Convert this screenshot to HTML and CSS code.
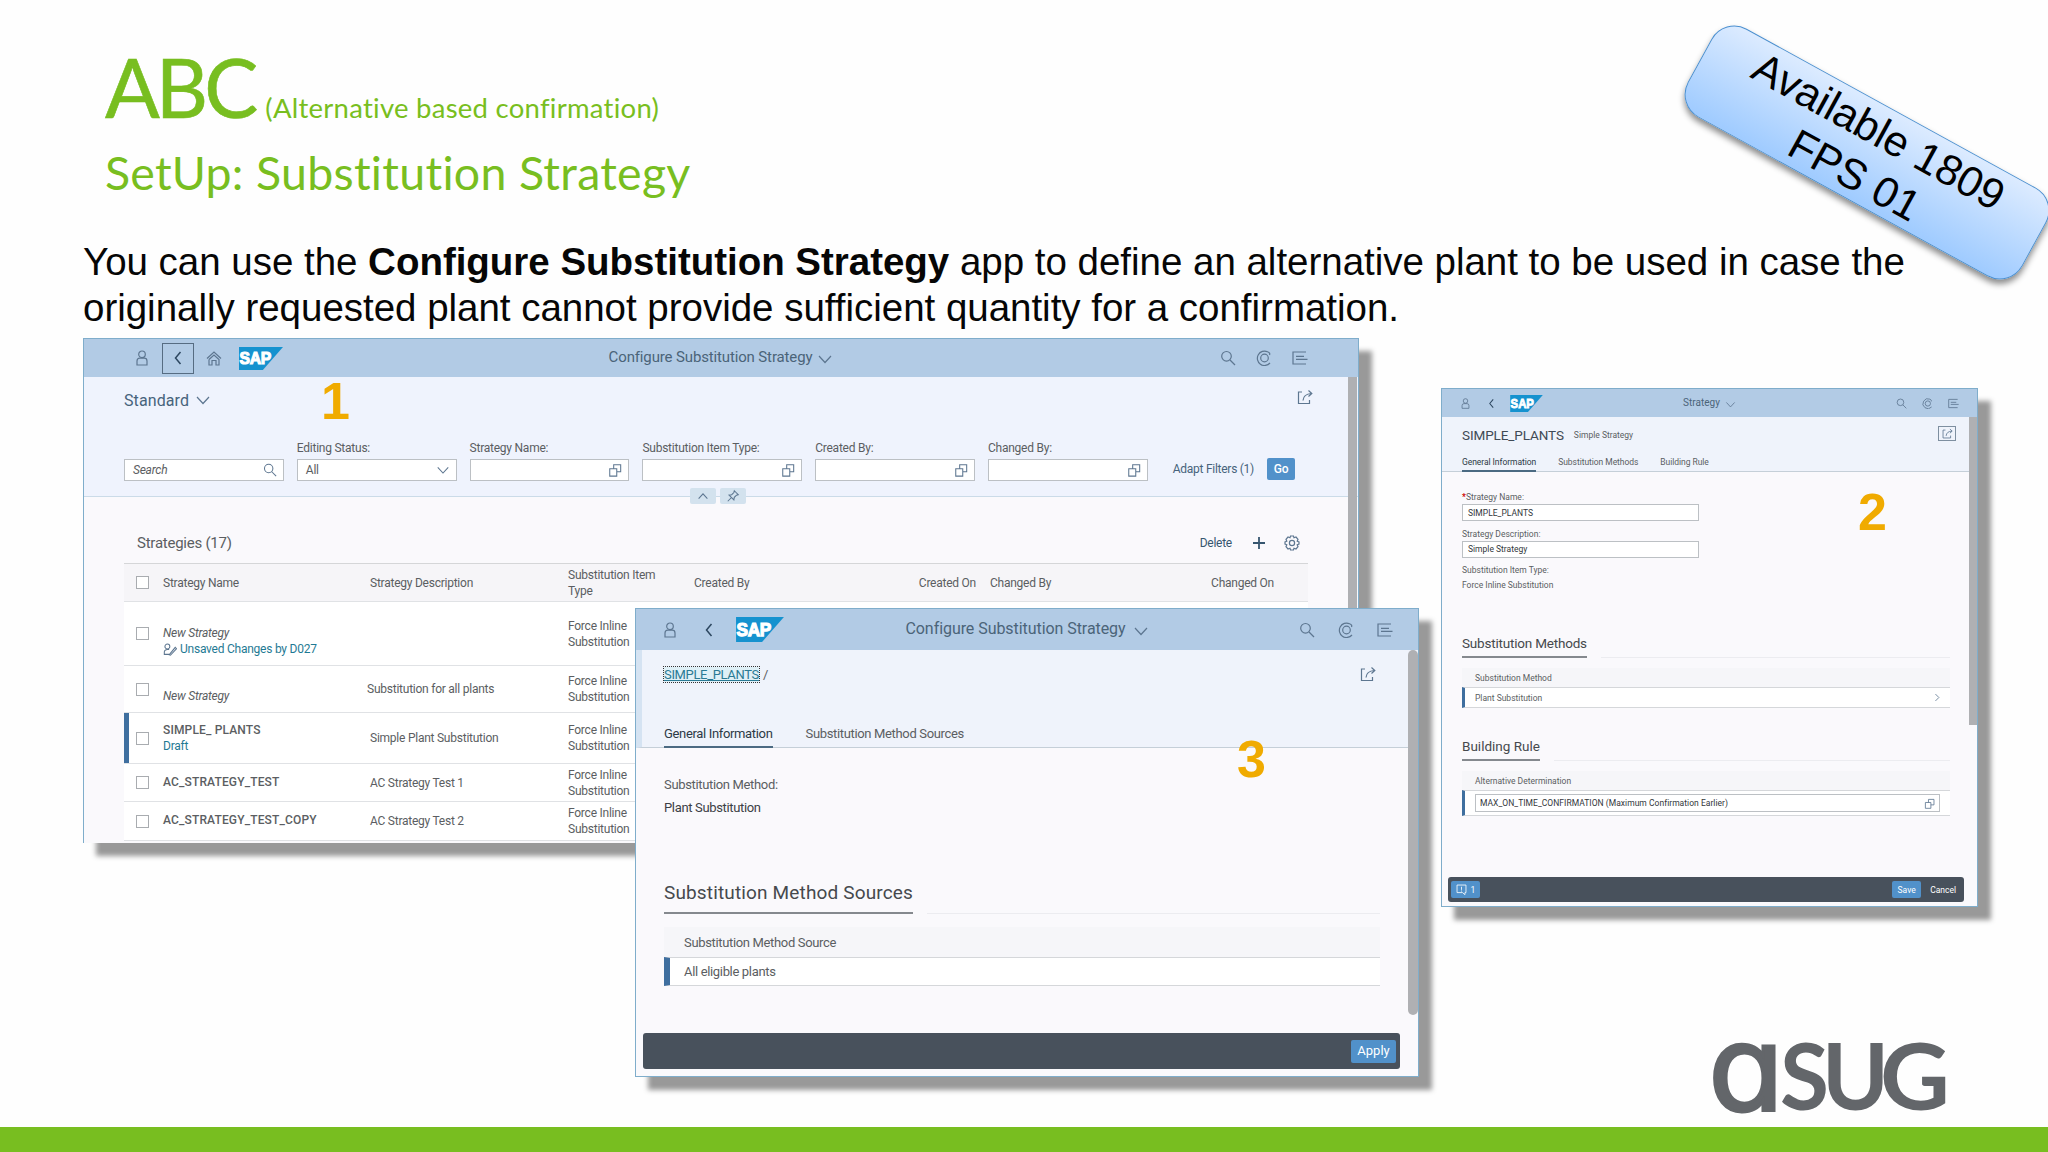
FILE: index.html
```html
<!DOCTYPE html>
<html lang="en">
  <head>
    <meta charset="utf-8" />
    <title>ABC SetUp: Substitution Strategy</title>
    <link rel="stylesheet" href="styles.css">
  </head>

  <body>
    <!-- icon set -->
    <svg class="defs">
      <symbol id="i-user" viewBox="0 0 16 16">
        <circle cx="8" cy="4.3" r="3.3" />
        <path d="M3 15V11Q3 8.2 5.8 8.2H10.2Q13 8.2 13 11V15Z" />
      </symbol>
      <symbol id="i-back" viewBox="0 0 16 16"><path d="M10.5 2 5.5 8l5 6" /></symbol>
      <symbol id="i-down" viewBox="0 0 16 16"><path d="M2 5l6 6.5L14 5" /></symbol>
      <symbol id="i-up" viewBox="0 0 16 16"><path d="M3 11l5-5.5 5 5.5" /></symbol>
      <symbol id="i-right" viewBox="0 0 16 16"><path d="M5 3l5 5-5 5" /></symbol>
      <symbol id="i-home" viewBox="0 0 16 16">
        <path d="M1 8.5 8 2l7 6.5M3 9.5 8 5l5 4.5V15H10V10.5H6V15H3V9.5" />
      </symbol>
      <symbol id="i-search" viewBox="0 0 16 16">
        <circle cx="6.5" cy="6.3" r="4.8" />
        <path d="M10 10l5 5" />
      </symbol>
      <symbol id="i-copilot" viewBox="0 0 16 16">
        <circle cx="8.5" cy="8" r="3.8" />
        <path d="M14 13A7.200 7.200 0 1 1 11.500 1.700Q14.500 3 13.500 5" />
      </symbol>
      <symbol id="i-menu" viewBox="0 0 16 16">
        <path d="M14 2H1V14H14M4 6.300H12M4 9.300H15.500" />
      </symbol>
      <symbol id="i-share" viewBox="0 0 16 16">
        <path d="M5 3H1.500V14.500H12.500V11M6 11.500Q6.500 5 14.500 4.500M11.500 1.500 14.800 4.500 11.500 7.500" />
      </symbol>
      <symbol id="i-help" viewBox="0 0 16 16">
        <path d="M2 6.500H10V15H2ZM6.500 6.500V2H14.500V10H10" />
      </symbol>
      <symbol id="i-pin" viewBox="0 0 16 16">
        <path d="M9.500 2 14 6.500 12 7 9.500 9.500 9 12.500 3.500 7 6.500 6.500 9 4ZM6 10 2 14" />
      </symbol>
      <symbol id="i-plus" viewBox="0 0 16 16"><path d="M8 2V14M2 8H14" /></symbol>
      <symbol id="i-gear" viewBox="0 0 16 16">
        <path d="M6.500 1H9.500L10 2.800 12 2 14 4.300 13.200 6.200 15 7V9L13.200 9.800 14 11.700 12 14 10 13.200 9.500 15H6.500L6 13.200 4 14 2 11.700 2.800 9.800 1 9V7L2.800 6.200 2 4.300 4 2 6 2.800Z" />
        <circle cx="8" cy="8" r="2.600" />
      </symbol>
      <symbol id="i-edit" viewBox="0 0 16 16">
        <circle cx="5" cy="4" r="2.800" />
        <path d="M7 13H1.500V10Q2 7.500 5 7.500H7M7 13.500 14 5l1.500 1.500L8.500 14Z" />
      </symbol>
      <symbol id="i-msg" viewBox="0 0 16 16">
        <path d="M1.500 1.500H14.500V12.500H13V15.500L9.500 12.500H1.500ZM8 4V8.500M8 9.500V11" />
      </symbol>
      <symbol id="i-sap" viewBox="0 0 46 24">
        <path class="sap-bg" d="M0 0H46L25 24H0Z" />
        <text class="sap-text" x="0.500" y="18" textLength="33" lengthAdjust="spacingAndGlyphs">SAP</text>
      </symbol>
    </svg>

    <main class="slide">
      <header class="title">
        <h1>ABC<small>(Alternative based confirmation)</small></h1>
        <h2>SetUp: Substitution Strategy</h2>
      </header>

      <p class="intro">
        You can use the <b>Configure Substitution Strategy</b> app to define an alternative plant to be used in case the<br />
        originally requested plant cannot provide sufficient quantity for a confirmation.
      </p>

      <div class="badge">Available 1809<br />FPS 01</div>

      <!-- 1. strategy list -->
      <section class="win win1">
        <div class="shell">
          <div class="shell-left">
            <svg class="ic"><use href="#i-user" /></svg>
            <span class="back-box"><svg class="ic dark"><use href="#i-back" /></svg></span>
            <svg class="ic"><use href="#i-home" /></svg>
            <svg class="sap"><use href="#i-sap" /></svg>
          </div>
          <div class="shell-title">
            <span>Configure Substitution Strategy</span>
            <svg class="ic"><use href="#i-down" /></svg>
          </div>
          <div class="shell-right">
            <svg class="ic"><use href="#i-search" /></svg>
            <svg class="ic"><use href="#i-copilot" /></svg>
            <svg class="ic"><use href="#i-menu" /></svg>
          </div>
        </div>

        <div class="filter">
          <div class="variant">
            <span>Standard</span>
            <svg class="ic"><use href="#i-down" /></svg>
            <svg class="ic share"><use href="#i-share" /></svg>
          </div>
          <div class="fields">
            <div class="field">
              <label></label>
              <div class="input"><i>Search</i><svg class="ic"><use href="#i-search" /></svg></div>
            </div>
            <div class="field">
              <label>Editing Status:</label>
              <div class="input"><span>All</span><svg class="ic"><use href="#i-down" /></svg></div>
            </div>
            <div class="field">
              <label>Strategy Name:</label>
              <div class="input"><span></span><svg class="ic"><use href="#i-help" /></svg></div>
            </div>
            <div class="field">
              <label>Substitution Item Type:</label>
              <div class="input"><span></span><svg class="ic"><use href="#i-help" /></svg></div>
            </div>
            <div class="field">
              <label>Created By:</label>
              <div class="input"><span></span><svg class="ic"><use href="#i-help" /></svg></div>
            </div>
            <div class="field">
              <label>Changed By:</label>
              <div class="input"><span></span><svg class="ic"><use href="#i-help" /></svg></div>
            </div>
            <span class="adapt">Adapt Filters (1)</span>
            <span class="btn go">Go</span>
          </div>
          <div class="toggles">
            <span><svg class="ic"><use href="#i-up" /></svg></span>
            <span><svg class="ic"><use href="#i-pin" /></svg></span>
          </div>
        </div>

        <div class="list">
          <div class="toolbar">
            <h3>Strategies (17)</h3>
            <span class="delete">Delete</span>
            <svg class="ic plus"><use href="#i-plus" /></svg>
            <svg class="ic gear"><use href="#i-gear" /></svg>
          </div>
          <div class="row head">
            <i class="cb"></i>
            <span>Strategy Name</span>
            <span>Strategy Description</span>
            <span>Substitution Item<br />Type</span>
            <span>Created By</span>
            <span class="right">Created On</span>
            <span class="changed-by">Changed By</span>
            <span class="right">Changed On</span>
          </div>
          <div class="row r1">
            <i class="cb"></i>
            <div class="name">
              <em>New Strategy</em>
              <span class="state"><svg class="ic"><use href="#i-edit" /></svg>Unsaved Changes by D027</span>
            </div>
            <span></span>
            <span>Force Inline<br />Substitution</span>
          </div>
          <div class="row r2">
            <i class="cb"></i>
            <div class="name"><em>New Strategy</em></div>
            <span class="desc-all">Substitution for all plants</span>
            <span>Force Inline<br />Substitution</span>
          </div>
          <div class="row r3">
            <i class="cb"></i>
            <div class="name"><b>SIMPLE_ PLANTS</b><span class="state">Draft</span></div>
            <span>Simple Plant Substitution</span>
            <span>Force Inline<br />Substitution</span>
          </div>
          <div class="row r4">
            <i class="cb"></i>
            <div class="name"><b>AC_STRATEGY_TEST</b></div>
            <span>AC Strategy Test 1</span>
            <span>Force Inline<br />Substitution</span>
          </div>
          <div class="row r5">
            <i class="cb"></i>
            <div class="name"><b>AC_STRATEGY_TEST_COPY</b></div>
            <span>AC Strategy Test 2</span>
            <span>Force Inline<br />Substitution</span>
          </div>
        </div>
        <i class="scroll"></i>
        <b class="num">1</b>
      </section>

      <!-- 2. strategy detail -->
      <section class="win win2">
        <div class="shell">
          <div class="shell-left">
            <svg class="ic"><use href="#i-user" /></svg>
            <svg class="ic dark"><use href="#i-back" /></svg>
            <svg class="sap"><use href="#i-sap" /></svg>
          </div>
          <div class="shell-title">
            <span>Strategy</span>
            <svg class="ic"><use href="#i-down" /></svg>
          </div>
          <div class="shell-right">
            <svg class="ic"><use href="#i-search" /></svg>
            <svg class="ic"><use href="#i-copilot" /></svg>
            <svg class="ic"><use href="#i-menu" /></svg>
          </div>
        </div>
        <div class="object">
          <div class="object-title">
            <h3>SIMPLE_PLANTS</h3>
            <span>Simple Strategy</span>
            <span class="share-box"><svg class="ic"><use href="#i-share" /></svg></span>
          </div>
          <nav class="tabs">
            <span class="on">General Information</span>
            <span>Substitution Methods</span>
            <span>Building Rule</span>
          </nav>
        </div>
        <div class="form">
          <label><b class="req">*</b>Strategy Name:</label>
          <div class="input">SIMPLE_PLANTS</div>
          <label>Strategy Description:</label>
          <div class="input">Simple Strategy</div>
          <label>Substitution Item Type:</label>
          <p>Force Inline Substitution</p>
        </div>
        <div class="block">
          <div class="block-title"><h4>Substitution Methods</h4></div>
          <div class="th">Substitution Method</div>
          <div class="td"><span>Plant Substitution</span><svg class="ic"><use href="#i-right" /></svg></div>
        </div>
        <div class="block rule">
          <div class="block-title"><h4>Building Rule</h4></div>
          <div class="th">Alternative Determination</div>
          <div class="td">
            <div class="input"><span>MAX_ON_TIME_CONFIRMATION (Maximum Confirmation Earlier)</span><svg class="ic"><use href="#i-help" /></svg></div>
          </div>
        </div>
        <footer class="bar">
          <span class="btn msg"><svg class="ic"><use href="#i-msg" /></svg>1</span>
          <span class="btn save">Save</span>
          <span class="cancel">Cancel</span>
        </footer>
        <i class="scroll"></i>
        <b class="num">2</b>
      </section>

      <!-- 3. method sources -->
      <section class="win win3">
        <div class="shell">
          <div class="shell-left">
            <svg class="ic"><use href="#i-user" /></svg>
            <svg class="ic dark"><use href="#i-back" /></svg>
            <svg class="sap"><use href="#i-sap" /></svg>
          </div>
          <div class="shell-title">
            <span>Configure Substitution Strategy</span>
            <svg class="ic"><use href="#i-down" /></svg>
          </div>
          <div class="shell-right">
            <svg class="ic"><use href="#i-search" /></svg>
            <svg class="ic"><use href="#i-copilot" /></svg>
            <svg class="ic"><use href="#i-menu" /></svg>
          </div>
        </div>
        <div class="object">
          <div class="crumb">
            <a>SIMPLE_PLANTS</a><span>/</span>
            <svg class="ic share"><use href="#i-share" /></svg>
          </div>
          <nav class="tabs">
            <span class="on">General Information</span>
            <span>Substitution Method Sources</span>
          </nav>
        </div>
        <div class="form">
          <label>Substitution Method:</label>
          <p>Plant Substitution</p>
        </div>
        <div class="block">
          <div class="block-title"><h4>Substitution Method Sources</h4></div>
          <div class="th">Substitution Method Source</div>
          <div class="td"><span>All eligible plants</span></div>
        </div>
        <footer class="bar"><span class="btn apply">Apply</span></footer>
        <i class="scroll"></i>
        <b class="num">3</b>
      </section>

      <svg class="asug" viewBox="0 0 236 72" role="img" aria-label="asug">
        <text class="asug-a" x="-4" y="68.500" textLength="77" lengthAdjust="spacingAndGlyphs">ɑ</text>
        <text x="68" y="69" textLength="49" lengthAdjust="spacingAndGlyphs">S</text>
        <text x="110" y="69" textLength="67" lengthAdjust="spacingAndGlyphs">U</text>
        <text x="168" y="69" textLength="70" lengthAdjust="spacingAndGlyphs">G</text>
      </svg>
      <div class="stripe"></div>
    </main>
  </body>
</html>
```
FILE: styles.css
```css
* {
  box-sizing: border-box;
}
body {
  margin: 0;
  background: #fff;
  font-family: Roboto, "Liberation Sans", sans-serif;
  color: #5b5e62;
}
h1, h2, h3, h4, p {
  margin: 0;
  font-weight: 400;
}
.defs {
  display: none;
}

/* slide */
.slide {
  position: relative;
  width: 2048px;
  height: 1152px;
  overflow: hidden;
  background: #fefefe;
}
.title {
  padding: 39px 0 0 105px;
  font-family: Lato, "Open Sans", sans-serif;
  font-variant-ligatures: none;
  color: #78be20;
}
.title h1 {
  font-size: 81px;
  line-height: 96px;
  letter-spacing: -4px;
  -webkit-text-stroke: .6px #78be20;
}
.title small {
  margin-left: 11px;
  font-size: 27.5px;
  letter-spacing: .26px;
  -webkit-text-stroke: 0;
}
.title h2 {
  margin-top: -11px;
  font-size: 46.5px;
  line-height: 54px;
  letter-spacing: .28px;
}
.intro {
  padding: 40px 0 0 83px;
  font: 38.5px/46px "Liberation Sans", Arial, sans-serif;
  letter-spacing: -.02px;
  white-space: nowrap;
  color: #060606;
}

/* version sticker */
.badge {
  position: absolute;
  left: 1676px;
  top: 102px;
  width: 382px;
  height: 101px;
  border: 1px solid #4a8fd0;
  border-radius: 26px;
  background: linear-gradient(#dcebff, #9fcbff);
  box-shadow: 2px 4px 6px rgba(0, 0, 0, .45);
  transform: rotate(28.8deg);
  font: 42.8px/50px "Liberation Sans", Arial, sans-serif;
  text-align: center;
  color: #000;
}

/* icons */
.ic {
  flex: none;
  width: 16px;
  height: 16px;
  fill: none;
  stroke: #5d7690;
  stroke-width: 1.2;
}
.ic.dark {
  stroke: #2d4760;
  stroke-width: 1.5;
}
.sap-bg {
  fill: #1592cf;
}
.sap-text {
  fill: #fff;
  stroke: #fff;
  stroke-width: 1.2;
  font: bold 18px "Liberation Sans", Arial, sans-serif;
}

/* windows */
.win {
  position: absolute;
  display: flex;
  flex-direction: column;
  border: 1px solid #7fadcb;
  background: #faf9fc;
  box-shadow: 13px 13px 5px #999;
}
.shell {
  display: grid;
  grid-template-columns: 1fr auto 1fr;
  align-items: center;
  background: #b2cbe5;
  color: #4b6479;
}
.shell-left,
.shell-title,
.shell-right {
  display: flex;
  align-items: center;
}
.shell-title span {
  margin-top: -2px;
}
.shell-title .ic {
  margin-top: 2px;
}
.shell-right {
  justify-content: flex-end;
}
.input {
  display: flex;
  align-items: center;
  justify-content: space-between;
  border: 1px solid #bcc0c4;
  background: #fff;
}
.btn {
  display: flex;
  align-items: center;
  justify-content: center;
  border-radius: 2px;
  background: #5191ca;
  color: #fff;
}
.scroll {
  position: absolute;
  background: #afb0b3;
}
.num {
  position: absolute;
  font: bold 52px/52px "Liberation Sans", Arial, sans-serif;
  color: #f0ab00;
}

/* window 1 */
.win1 {
  left: 83px;
  top: 338px;
  width: 1276px;
  height: 505px;
  border-bottom: 0;
  font-size: 12px;
  letter-spacing: -.24px;
}
.win1 .shell {
  height: 38px;
}
.win1 .shell-left {
  padding-left: 50px;
}
.back-box {
  display: flex;
  align-items: center;
  justify-content: center;
  width: 32px;
  height: 31px;
  margin: 0 12px 0 12px;
  border: 1px solid #566c82;
}
.win1 .sap {
  width: 44px;
  height: 23px;
  margin-left: 17px;
}
.win1 .shell-title {
  font-size: 15px;
  letter-spacing: -.14px;
  gap: 5px;
}
.win1 .shell-right {
  gap: 20px;
  padding-right: 50px;
}
.filter {
  height: 120px;
  padding: 12px 0 0 40px;
  border-bottom: 1px solid #cbdbe8;
  background: #eff3fd;
}
.variant {
  display: flex;
  align-items: center;
  height: 22px;
  font-size: 16px;
  letter-spacing: .1px;
  color: #47637c;
}
.variant .ic {
  margin-left: 6px;
}
.variant .share {
  margin: -7px 45px 0 auto;
}
.fields {
  display: flex;
  gap: 13px;
  height: 72px;
  padding-top: 29px;
}
.field {
  width: 159.8px;
}
.field label {
  display: block;
  height: 18px;
  line-height: 16px;
  white-space: nowrap;
}
.field .input {
  height: 22px;
  margin-top: 1px;
  padding: 0 6px 0 8px;
}
.field .ic {
  width: 14px;
  height: 14px;
}
.adapt {
  margin: 21px 0 0 12px;
  line-height: 16px;
  letter-spacing: -.27px;
  white-space: nowrap;
  color: #47637c;
}
.btn.go {
  width: 28px;
  height: 22px;
  margin-top: 18px;
  font-weight: 500;
}
.toggles {
  display: flex;
  gap: 4px;
  padding: 5px 0 0 566px;
}
.toggles span {
  display: flex;
  align-items: center;
  justify-content: center;
  width: 26px;
  height: 16px;
  border-radius: 2px;
  background: #d3e2ee;
}
.toggles .ic {
  width: 14px;
  height: 14px;
}
.list {
  padding: 0 50px 0 40px;
}
.toolbar {
  display: flex;
  align-items: center;
  height: 66px;
  padding: 25px 8px 0 13px;
}
.toolbar h3 {
  flex: 1;
  font-size: 15px;
}
.delete {
  color: #36566f;
}
.toolbar .plus {
  margin: 0 17px 0 19px;
  stroke: #36566f;
  stroke-width: 1.8;
}
.row {
  display: grid;
  grid-template-columns: 26px 207px 198px 126px 169px 113px 130px 168px;
  align-items: center;
  padding-left: 13px;
  border-bottom: 1px solid #e0e2e5;
  background: #fff;
  line-height: 15.6px;
  white-space: nowrap;
}
.row > span {
  padding-top: 2px;
}
.row.head {
  height: 39px;
  border-top: 1px solid #d5d6d8;
  background: #f6f5f8;
}
.cb {
  width: 13px;
  height: 13px;
  margin-left: -1px;
  border: 1px solid #a9acb0;
  background: #fff;
}
.right {
  text-align: right;
}
.changed-by {
  padding-left: 14px;
}
.name {
  display: flex;
  flex-direction: column;
}
.name b {
  font-weight: 500;
  letter-spacing: .15px;
}
.state {
  display: flex;
  align-items: center;
  color: #1f7a94;
}
.state .ic {
  width: 14px;
  height: 14px;
  margin-right: 3px;
}
.r1 { height: 64px; }
.r1 .name { padding-top: 17px; }
.r2 { height: 47px; }
.r2 .name { padding-top: 16px; }
.r3 { height: 51px; box-shadow: inset 5px 0 #3f6f9f; }
.r3 .name { padding-top: 1px; }
.r4 { height: 38px; }
.r5 { height: 39px; }
.desc-all { margin-left: -3px; }
.win1 .scroll {
  right: 1px;
  top: 38px;
  width: 9px;
  bottom: 0;
}
.win1 .num {
  left: 237px;
  top: 36px;
}

/* object pages (windows 2 and 3) */
.object {
  border-bottom: 1px solid #c5cfd8;
  background: #eff3fb;
}
.tabs {
  display: flex;
}
.tabs .on {
  border-bottom: 2px solid #4b6a82;
  color: #2d3a46;
}
.block-title {
  display: flex;
}
.block-title h4 {
  border-bottom: 2px solid #85898e;
  white-space: nowrap;
  color: #46494d;
}
.block-title::after {
  content: "";
  flex: 1;
  margin-left: 14px;
  border-bottom: 1px solid #ececf0;
}
.th {
  display: flex;
  align-items: center;
  background: #f6f6f9;
}
.td {
  display: flex;
  align-items: center;
  justify-content: space-between;
  border: solid #d5d7da;
  border-width: 1px 0;
  background: #fff;
}
.bar {
  display: flex;
  align-items: center;
  border-radius: 3px;
  background: #48515c;
  color: #fff;
}

/* window 2 */
.win2 {
  left: 1441px;
  top: 388px;
  width: 537px;
  height: 519px;
  font-size: 8.5px;
}
.win2 .ic {
  width: 11px;
  height: 11px;
}
.win2 .shell {
  height: 28px;
}
.win2 .shell-left {
  gap: 15px;
  padding-left: 18px;
}
.win2 .sap {
  width: 33px;
  height: 17px;
  margin-left: -2px;
}
.win2 .shell-title {
  gap: 5px;
  font-size: 10px;
}
.win2 .shell-right {
  gap: 15px;
  padding-right: 18px;
}
.win2 .object {
  height: 55px;
  padding: 8px 0 0 20px;
}
.object-title {
  display: flex;
  align-items: center;
  height: 19px;
}
.object-title h3 {
  margin-right: 10px;
  font-size: 13.5px;
  letter-spacing: -.1px;
  color: #3f4a55;
}
.share-box {
  display: flex;
  align-items: center;
  justify-content: center;
  width: 18px;
  height: 15px;
  margin: -3px 21px 0 auto;
  border: 1px solid #7e8fa0;
}
.win2 .tabs {
  gap: 22px;
  padding-top: 11px;
}
.win2 .tabs span {
  height: 17px;
  line-height: 14px;
  letter-spacing: -.05px;
}
.win2 .form {
  width: 257px;
  height: 162px;
  padding: 18px 0 0 20px;
}
.win2 .form label {
  display: block;
  height: 14px;
  line-height: 14px;
}
.win2 .form .input {
  height: 17px;
  margin-bottom: 5.5px;
  padding-left: 5px;
  color: #33373b;
}
.win2 .form p {
  line-height: 17px;
}
.req {
  color: #c00;
}
.win2 .block {
  height: 103px;
  padding: 0 27px 0 20px;
}
.win2 h4 {
  height: 24px;
  font-size: 13.5px;
  line-height: 18px;
  letter-spacing: -.2px;
}
.win2 .rule h4 {
  letter-spacing: 0;
}
.win2 .th {
  height: 19px;
  margin-top: 10px;
  padding-left: 13px;
}
.win2 .td {
  height: 21px;
  padding: 0 7px 0 10px;
  border-left: 3px solid #3f6f9f;
}
.win2 .rule .td {
  height: 26px;
  padding-right: 10px;
}
.win2 .td .input {
  flex: 1;
  height: 18px;
  padding: 0 4px;
  letter-spacing: .03px;
  color: #33373b;
}
.win2 .bar {
  height: 25px;
  margin: 37px 13px 0 6px;
  padding: 0 8px 0 3px;
}
.win2 .bar .btn {
  width: 29px;
  height: 17px;
}
.msg {
  gap: 4px;
}
.msg .ic {
  stroke: #fff;
}
.win2 .save {
  margin: 0 9px 0 auto;
}
.win2 .scroll {
  right: 0;
  top: 28px;
  width: 8px;
  height: 308px;
}
.win2 .num {
  left: 416px;
  top: 97px;
}

/* window 3 */
.win3 {
  left: 635px;
  top: 608px;
  width: 784px;
  height: 469px;
  font-size: 13px;
  letter-spacing: -.34px;
}
.win3 .shell {
  height: 41px;
}
.win3 .shell-left {
  gap: 23px;
  padding-left: 26px;
}
.win3 .sap {
  width: 48px;
  height: 25px;
  margin-left: -4px;
}
.win3 .shell-title {
  gap: 7px;
  font-size: 16px;
  letter-spacing: -.06px;
}
.win3 .shell-right {
  gap: 23px;
  padding-right: 25px;
}
.win3 .object {
  height: 98px;
  padding-left: 22px;
  border-left: 6px solid #d5e3f2;
}
.crumb {
  display: flex;
  align-items: center;
  height: 48px;
}
.crumb a {
  outline: 1px dotted #333;
  background: #dff0f7;
  text-decoration: underline;
  color: #2b7a94;
}
.crumb span {
  margin-left: 4px;
}
.crumb .share {
  margin: 0 42px 0 auto;
}
.win3 .tabs {
  gap: 33px;
  padding-top: 26px;
}
.win3 .tabs span {
  height: 24px;
  line-height: 20px;
}
.win3 .form {
  height: 132px;
  padding: 25px 0 0 28px;
}
.win3 .form label,
.win3 .form p {
  display: block;
  line-height: 23px;
}
.win3 .form p {
  color: #3c4045;
}
.win3 .block {
  padding: 0 38px 0 28px;
}
.win3 h4 {
  height: 34px;
  font-size: 19px;
  line-height: 26px;
  letter-spacing: .15px;
}
.win3 .th {
  height: 30px;
  margin-top: 13px;
  padding-left: 20px;
}
.win3 .td {
  height: 29px;
  padding-left: 14px;
  border-left: 6px solid #3f6f9f;
}
.win3 .bar {
  justify-content: flex-end;
  height: 36px;
  margin: 47px 18px 0 7px;
  padding-right: 4px;
}
.apply {
  width: 45px;
  height: 23px;
  padding-bottom: 1px;
  letter-spacing: 0;
}
.win3 .scroll {
  right: 0;
  top: 41px;
  width: 10px;
  height: 365px;
  border-radius: 5px;
}
.win3 .num {
  left: 601px;
  top: 124px;
}

/* footer */
.asug {
  position: absolute;
  left: 1712px;
  top: 1041px;
  width: 236px;
  height: 72px;
  overflow: visible;
  fill: #63666a;
  font: bold 92px Lato, sans-serif;
}
.asug-a {
  stroke: #63666a;
  stroke-width: 3;
  font: 117px "DejaVu Sans", sans-serif;
}
.stripe {
  position: absolute;
  left: 0;
  right: 0;
  bottom: 0;
  height: 25px;
  background: #78be20;
}
```
